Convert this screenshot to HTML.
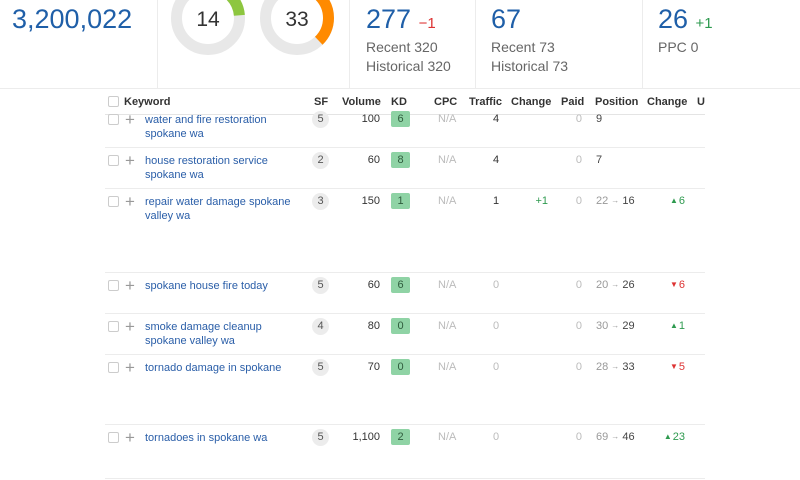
<!DOCTYPE html>
<html><head><meta charset="utf-8"><style>
*{margin:0;padding:0;box-sizing:border-box}
body{width:800px;height:480px;overflow:hidden;background:#fff;font-family:"Liberation Sans",Arial,sans-serif;position:relative;color:#333}
.a{position:absolute;white-space:nowrap}
.big{font-size:27px;color:#1f5fa8;line-height:1}
.sub{font-size:14px;color:#666}
.vl{position:absolute;top:0;width:1px;height:88px;background:#ececec}
.hl{position:absolute;left:105px;width:600px;height:1px;background:#ececec}
.th{font-size:11px;font-weight:bold;color:#333;top:96px}
.cb{position:absolute;left:108px;width:11px;height:11px;border:1px solid #ccc;border-radius:2px;background:#fff}
.pl{position:absolute;left:125px;font-size:17px;color:#999;line-height:11px;font-weight:300}
.kw{position:absolute;left:145px;font-size:11px;color:#2a5ea8;line-height:14px;width:160px}
.sf{position:absolute;left:312px;width:17px;height:17px;border-radius:50%;background:#ececec;color:#555;font-size:11px;text-align:center;line-height:17px}
.vol{position:absolute;right:420px;font-size:11px;color:#333}
.kd{position:absolute;left:391px;width:19px;height:16px;background:#8fd3a5;color:#2f5c3d;font-size:11px;text-align:center;line-height:16px;border-radius:2px}
.na{position:absolute;left:438px;font-size:11px;color:#bbb}
.tr{position:absolute;left:493px;font-size:11px}
.ch{position:absolute;right:252px;font-size:11px;color:#2e9a4f}
.pd{position:absolute;right:218px;font-size:11px;color:#bbb}
.pos{position:absolute;left:596px;font-size:11px;color:#999}
.pos b{font-weight:normal;color:#444}
.pos i{font-style:normal;font-size:8px;position:relative;top:-1px}
.pc{position:absolute;right:115px;font-size:11px}
.pc i{font-style:normal;font-size:8px;position:relative;top:-1px;margin-right:1px}
.up{color:#2e9a4f}.dn{color:#d33}
</style></head><body>
<div class="a big" style="left:12px;top:6px">3,200,022</div>
<div class="vl" style="left:157px"></div>
<div class="vl" style="left:349px"></div>
<div class="vl" style="left:475px"></div>
<div class="vl" style="left:642px"></div>
<div style="position:absolute;left:0;top:88px;width:800px;height:1px;background:#ececec"></div>
<svg class="a" style="left:0;top:0" width="349" height="88">
<circle cx="208" cy="18" r="31.5" fill="none" stroke="#e8e8e8" stroke-width="11"/>
<circle cx="208" cy="18" r="31.5" fill="none" stroke="#8dc63f" stroke-width="11" stroke-dasharray="46.7 300" transform="rotate(-90 208 18)"/>
<circle cx="297" cy="18" r="31.5" fill="none" stroke="#e8e8e8" stroke-width="11"/>
<circle cx="297" cy="18" r="31.5" fill="none" stroke="#ff8a00" stroke-width="11" stroke-dasharray="74.8 300" transform="rotate(-90 297 18)"/>
<text x="208" y="26" text-anchor="middle" font-size="21" fill="#333" font-family="Liberation Sans">14</text>
<text x="297" y="26" text-anchor="middle" font-size="21" fill="#333" font-family="Liberation Sans">33</text>
</svg>
<div class="a big" style="left:366px;top:6px">277 <span style="font-size:15px;color:#d33">−1</span></div>
<div class="a sub" style="left:366px;top:39px">Recent 320</div>
<div class="a sub" style="left:366px;top:58px">Historical 320</div>
<div class="a big" style="left:491px;top:6px">67</div>
<div class="a sub" style="left:491px;top:39px">Recent 73</div>
<div class="a sub" style="left:491px;top:58px">Historical 73</div>
<div class="a big" style="left:658px;top:6px">26 <span style="font-size:15px;color:#2e9a4f">+1</span></div>
<div class="a sub" style="left:658px;top:39px">PPC 0</div>

<div class="cb" style="top:96px"></div>
<div class="a th" style="left:124px">Keyword</div>
<div class="a th" style="left:314px">SF</div>
<div class="a th" style="left:342px">Volume</div>
<div class="a th" style="left:391px">KD</div>
<div class="a th" style="left:434px">CPC</div>
<div class="a th" style="left:469px">Traffic</div>
<div class="a th" style="left:511px">Change</div>
<div class="a th" style="left:561px">Paid</div>
<div class="a th" style="left:595px">Position</div>
<div class="a th" style="left:647px">Change</div>
<div class="a th" style="left:697px">U</div>
<div class="hl" style="top:114px;background:#e4e4e4"></div>

<div class="cb" style="top:114px"></div><div class="pl" style="top:114px">+</div>
<div class="kw" style="top:113px">water and fire restoration<br>spokane wa</div>
<div class="sf" style="top:111px">5</div><div class="vol" style="top:113px">100</div><div class="kd" style="top:111px">6</div>
<div class="na" style="top:113px">N/A</div><div class="tr" style="top:113px">4</div><div class="pd" style="top:113px">0</div><div class="pos" style="left:596px;top:113px"><b>9</b></div>
<div class="hl" style="top:147px"></div>

<div class="cb" style="top:155px"></div><div class="pl" style="top:155px">+</div>
<div class="kw" style="top:154px">house restoration service<br>spokane wa</div>
<div class="sf" style="top:152px">2</div><div class="vol" style="top:154px">60</div><div class="kd" style="top:152px">8</div>
<div class="na" style="top:154px">N/A</div><div class="tr" style="top:154px">4</div><div class="pd" style="top:154px">0</div><div class="pos" style="top:154px"><b>7</b></div>
<div class="hl" style="top:188px"></div>

<div class="cb" style="top:196px"></div><div class="pl" style="top:196px">+</div>
<div class="kw" style="top:195px">repair water damage spokane<br>valley wa</div>
<div class="sf" style="top:193px">3</div><div class="vol" style="top:195px">150</div><div class="kd" style="top:193px">1</div>
<div class="na" style="top:195px">N/A</div><div class="tr" style="top:195px">1</div><div class="ch" style="top:195px">+1</div><div class="pd" style="top:195px">0</div>
<div class="pos" style="top:195px">22 <i>→</i> <b>16</b></div><div class="pc up" style="top:195px"><i>▲</i>6</div>
<div class="hl" style="top:272px"></div>

<div class="cb" style="top:280px"></div><div class="pl" style="top:280px">+</div>
<div class="kw" style="top:279px">spokane house fire today</div>
<div class="sf" style="top:277px">5</div><div class="vol" style="top:279px">60</div><div class="kd" style="top:277px">6</div>
<div class="na" style="top:279px">N/A</div><div class="tr" style="top:279px;color:#bbb">0</div><div class="pd" style="top:279px">0</div>
<div class="pos" style="top:279px">20 <i>→</i> <b>26</b></div><div class="pc dn" style="top:279px"><i>▼</i>6</div>
<div class="hl" style="top:313px"></div>

<div class="cb" style="top:321px"></div><div class="pl" style="top:321px">+</div>
<div class="kw" style="top:320px">smoke damage cleanup<br>spokane valley wa</div>
<div class="sf" style="top:318px">4</div><div class="vol" style="top:320px">80</div><div class="kd" style="top:318px">0</div>
<div class="na" style="top:320px">N/A</div><div class="tr" style="top:320px;color:#bbb">0</div><div class="pd" style="top:320px">0</div>
<div class="pos" style="top:320px">30 <i>→</i> <b>29</b></div><div class="pc up" style="top:320px"><i>▲</i>1</div>
<div class="hl" style="top:354px"></div>

<div class="cb" style="top:362px"></div><div class="pl" style="top:362px">+</div>
<div class="kw" style="top:361px">tornado damage in spokane</div>
<div class="sf" style="top:359px">5</div><div class="vol" style="top:361px">70</div><div class="kd" style="top:359px">0</div>
<div class="na" style="top:361px">N/A</div><div class="tr" style="top:361px;color:#bbb">0</div><div class="pd" style="top:361px">0</div>
<div class="pos" style="top:361px">28 <i>→</i> <b>33</b></div><div class="pc dn" style="top:361px"><i>▼</i>5</div>
<div class="hl" style="top:424px"></div>

<div class="cb" style="top:432px"></div><div class="pl" style="top:432px">+</div>
<div class="kw" style="top:431px">tornadoes in spokane wa</div>
<div class="sf" style="top:429px">5</div><div class="vol" style="top:431px">1,100</div><div class="kd" style="top:429px">2</div>
<div class="na" style="top:431px">N/A</div><div class="tr" style="top:431px;color:#bbb">0</div><div class="pd" style="top:431px">0</div>
<div class="pos" style="top:431px">69 <i>→</i> <b>46</b></div><div class="pc up" style="top:431px"><i>▲</i>23</div>
<div class="hl" style="top:478px"></div>
</body></html>
